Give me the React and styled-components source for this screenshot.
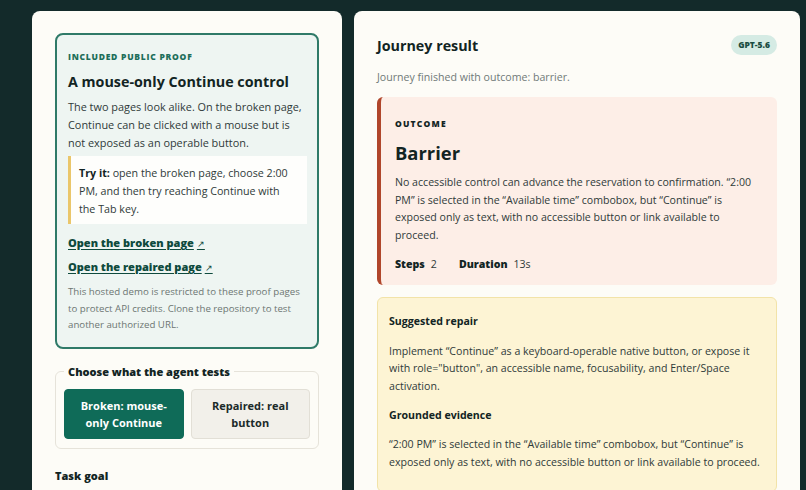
import styled, { createGlobalStyle } from 'styled-components';

const Global = createGlobalStyle`
  html, body {
    margin: 0;
    background: #132a2a;
    font-family: "Open Sans", "Noto Sans", sans-serif;
    color: #162625;
  }
  * { box-sizing: border-box; }
`;

const Page = styled.main`
  display: grid;
  grid-template-columns: 310px 446px;
  gap: 12px;
  padding: 11px 0 0 32px;
  height: 490px;
  overflow: hidden;
`;

const Panel = styled.section`
  background: #fdfcf7;
  border-radius: 8px 8px 0 0;
  padding: 22px 23px;
  display: flex;
  flex-direction: column;
`;

const ProofCard = styled.div`
  border: 2px solid #2f7a68;
  border-radius: 8px;
  background: #eef5f2;
  padding: 16px 10px 13px 11px;
`;

const Eyebrow = styled.div`
  font-size: 8.5px;
  line-height: 12px;
  font-weight: 800;
  letter-spacing: ${p => p.$spacing || '0.75px'};
  text-transform: uppercase;
  color: ${p => p.$color || '#1d6e5a'};
`;

const CardTitle = styled.h2`
  margin: 9px 0 6px;
  font-size: 14.3px;
  line-height: 20px;
  font-weight: 700;
  color: #122423;
`;

const Text = styled.p`
  margin: 0;
  font-size: ${p => p.$size || '10.6px'};
  line-height: ${p => p.$lh || '17.6px'};
  color: #2f3a39;
`;

const TryIt = styled.div`
  margin: 4px 0 11px;
  background: #fefefc;
  border-left: 3px solid #eac66a;
  padding: 8px 10px 6px 8px;
  font-size: 10.7px;
  line-height: 18px;
  color: #2f3a39;
  & b { color: #122423; font-weight: 700; }
`;

const ProofLink = styled.a`
  display: block;
  font-size: 11px;
  font-weight: 800;
  color: #0e4a3d;
  text-decoration: underline;
  text-decoration-thickness: 1.2px;
  text-underline-offset: 2px;
  line-height: 16px;
  & + & { margin-top: 8px; }
`;

const Arrow = styled.span`
  font-size: 9px;
  line-height: 0;
  font-weight: 400;
  margin-left: 3px;
`;

const Note = styled.p`
  margin: 9px 0 0;
  font-size: 9.7px;
  line-height: 16.5px;
  color: #6d7673;
`;

const Fieldset = styled.fieldset`
  margin: 15px 0 0;
  border: 1px solid #e6e3da;
  border-radius: 6px;
  padding: 9px 8px 9px;
  display: grid;
  grid-template-columns: 1fr 1fr;
  gap: 7px;
`;

const Legend = styled.legend`
  font-size: 11px;
  line-height: 16px;
  font-weight: 800;
  padding: 0 4px;
  color: #122423;
`;

const Choice = styled.button`
  height: 50px;
  border-radius: 4px;
  font-family: inherit;
  font-size: 11px;
  font-weight: 700;
  line-height: 17px;
  padding: 0 12px;
  border: 1px solid ${p => (p.$active ? '#0f6b58' : '#e2dfd6')};
  background: ${p => (p.$active ? '#0f6b58' : '#f2f0ea')};
  color: ${p => (p.$active ? '#ffffff' : '#1b2a29')};
`;

const SubHead = styled.h3`
  margin: 19px 0 0;
  font-size: 11px;
  line-height: 16px;
  font-weight: 800;
  color: #122423;
`;

const ResultHeader = styled.div`
  display: flex;
  justify-content: space-between;
  align-items: center;
  margin-top: 2px;
  height: 20px;
`;

const ResultTitle = styled.h2`
  margin: 2px 0 0;
  font-size: 14.3px;
  line-height: 20px;
  font-weight: 700;
  color: #122423;
`;

const Badge = styled.span`
  background: #d5ebe4;
  color: #1a4d42;
  font-size: 8.5px;
  line-height: 12px;
  font-weight: 800;
  padding: 4px 7px;
  border-radius: 10px;
`;

const Status = styled.p`
  margin: 14px 0 12px;
  font-size: 10.6px;
  line-height: 16px;
  color: #707a77;
`;

const Outcome = styled.div`
  background: #fdeee7;
  border-left: 4px solid #b0462b;
  border-radius: 6px;
  padding: 21px 18px 13px 14px;
`;

const Verdict = styled.h3`
  margin: 10px 0 8px;
  font-size: 18.4px;
  line-height: 26px;
  font-weight: 700;
  color: #122423;
`;

const Stats = styled.div`
  display: flex;
  gap: 22px;
  margin-top: 12px;
  font-size: 10.6px;
  line-height: 16px;
  color: #2f3a39;
  & b { color: #122423; margin-right: 6px; font-weight: 800; }
`;

const Repair = styled.div`
  margin-top: 12px;
  background: #fdf4d4;
  border: 1px solid #f2e3a8;
  border-radius: 6px;
  padding: 15px 10px 20px 11px;
`;

const RepairHead = styled.h4`
  margin: 0 0 13.5px;
  font-size: 10.6px;
  line-height: 16px;
  font-weight: 700;
  color: #122423;
  & + p + & { margin-top: 11px; }
`;

export default function App() {
  return (
    <>
      <Global />
      <Page>
        <Panel>
          <ProofCard>
            <Eyebrow>Included public proof</Eyebrow>
            <CardTitle>A mouse-only Continue control</CardTitle>
            <Text $lh="18px" $size="10.9px">
              The two pages look alike. On the broken page, Continue can be clicked with a mouse but is
              not exposed as an operable button.
            </Text>
            <TryIt>
              <b>Try it:</b> open the broken page, choose 2:00 PM, and then try reaching Continue with
              the Tab key.
            </TryIt>
            <ProofLink href="#broken">Open the broken page<Arrow>↗</Arrow></ProofLink>
            <ProofLink href="#repaired">Open the repaired page<Arrow>↗</Arrow></ProofLink>
            <Note>
              This hosted demo is restricted to these proof pages to protect API credits. Clone the
              repository to test another authorized URL.
            </Note>
          </ProofCard>
          <Fieldset>
            <Legend>Choose what the agent tests</Legend>
            <Choice $active>Broken: mouse-only Continue</Choice>
            <Choice>Repaired: real button</Choice>
          </Fieldset>
          <SubHead>Task goal</SubHead>
        </Panel>
        <Panel>
          <ResultHeader>
            <ResultTitle>Journey result</ResultTitle>
            <Badge>GPT-5.6</Badge>
          </ResultHeader>
          <Status>Journey finished with outcome: barrier.</Status>
          <Outcome>
            <Eyebrow $color="#122423" $spacing="1.2px">Outcome</Eyebrow>
            <Verdict>Barrier</Verdict>
            <Text>
              No accessible control can advance the reservation to confirmation. “2:00 PM” is selected in
              the “Available time” combobox, but “Continue” is exposed only as text, with no accessible
              button or link available to proceed.
            </Text>
            <Stats>
              <span><b>Steps</b>2</span>
              <span><b>Duration</b>13s</span>
            </Stats>
          </Outcome>
          <Repair>
            <RepairHead>Suggested repair</RepairHead>
            <Text>
              Implement “Continue” as a keyboard-operable native button, or expose it with
              role="button", an accessible name, focusability, and Enter/Space activation.
            </Text>
            <RepairHead>Grounded evidence</RepairHead>
            <Text>
              “2:00 PM” is selected in the “Available time” combobox, but “Continue” is exposed only as
              text, with no accessible button or link available to proceed.
            </Text>
          </Repair>
        </Panel>
      </Page>
    </>
  );
}
